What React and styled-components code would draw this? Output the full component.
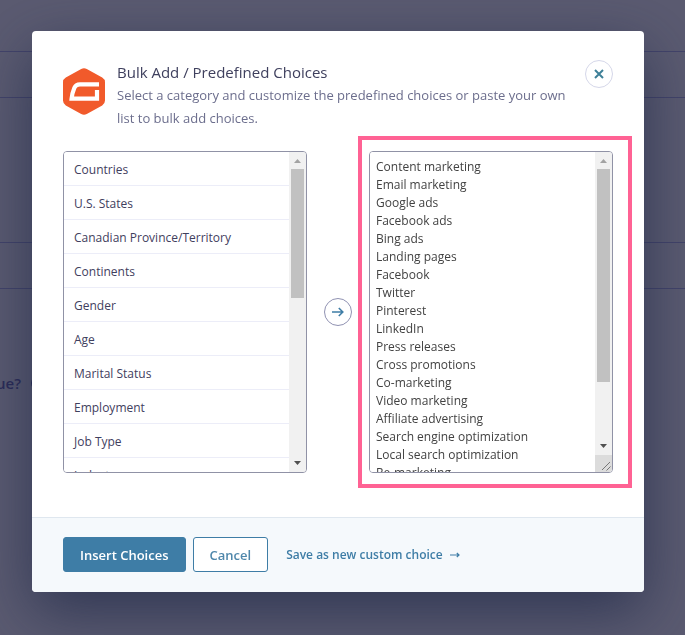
import React, { useState } from 'react'
import styled, { createGlobalStyle } from 'styled-components'

const categories = [
    'Countries',
    'U.S. States',
    'Canadian Province/Territory',
    'Continents',
    'Gender',
    'Age',
    'Marital Status',
    'Employment',
    'Job Type',
    'Industry',
]

const marketing = [
    'Content marketing',
    'Email marketing',
    'Google ads',
    'Facebook ads',
    'Bing ads',
    'Landing pages',
    'Facebook',
    'Twitter',
    'Pinterest',
    'LinkedIn',
    'Press releases',
    'Cross promotions',
    'Co-marketing',
    'Video marketing',
    'Affiliate advertising',
    'Search engine optimization',
    'Local search optimization',
    'Re-marketing',
].join('\n')

function Logo() {
    return (
        <LogoSvg viewBox="0 0 42 47" aria-hidden="true">
            <path
                fill="#f15a2b"
                d="M18.2 1 Q21 -.6 23.8 1 L39.2 9.6 Q42 11.2 42 14.4 V32.6 Q42 35.8 39.2 37.4 L23.8 46 Q21 47.6 18.2 46 L2.8 37.4 Q0 35.8 0 32.6 V14.4 Q0 11.2 2.8 9.6 Z"
            />
            <path
                fill="none"
                stroke="#fff"
                strokeWidth="4.2"
                d="M36 16.3 H17 Q12.8 16.3 11.4 19.8 Q9.2 25 8.6 30.7 H34 V22"
            />
        </LogoSvg>
    )
}

function ScrollBar({ thumb, grip }) {
    return (
        <Track aria-hidden="true">
            <Arrow viewBox="0 0 17 17">
                <path fill="#a3a3a3" d="M5 11 L8.5 7 L12 11 Z" />
            </Arrow>
            <Rail>
                <Thumb $size={thumb} />
            </Rail>
            <Arrow viewBox="0 0 17 17">
                <path fill="#505050" d="M5 6 L8.5 10 L12 6 Z" />
            </Arrow>
            {grip && (
                <Grip viewBox="0 0 17 17">
                    <path stroke="#777" fill="none" d="M7 15 L15 7 M11.5 15.5 L15.5 11.5" />
                </Grip>
            )}
        </Track>
    )
}

export default function App() {
    const [choices, setChoices] = useState(marketing)

    return (
        <>
            <GlobalStyle />
            <Page aria-hidden="true">
                <Field />
                <Field />
                <Question>
                    ue? <Info />
                </Question>
            </Page>
            <Overlay>
                <Modal role="dialog" aria-labelledby="bulk-title">
                    <Header>
                        <Logo />
                        <Heading>
                            <Title id="bulk-title">Bulk Add / Predefined Choices</Title>
                            <Description>
                                Select a category and customize the predefined choices or paste your own
                                list to bulk add choices.
                            </Description>
                        </Heading>
                        <CloseButton aria-label="Close">
                            <svg width="10" height="10" viewBox="0 0 10 10">
                                <path stroke="#3e8098" strokeWidth="2" d="M1 1 L9 9 M9 1 L1 9" />
                            </svg>
                        </CloseButton>
                    </Header>
                    <Panels>
                        <Frame>
                            <CategoryList>
                                {categories.map(name => (
                                    <li key={name}>
                                        <CategoryButton>{name}</CategoryButton>
                                    </li>
                                ))}
                            </CategoryList>
                            <ScrollBar thumb={45} />
                        </Frame>
                        <MoveButton aria-label="Add choices">
                            <svg width="12" height="10" viewBox="0 0 12 10">
                                <path fill="none" stroke="#3e7da6" strokeWidth="1.6" d="M0 5 H10.6 M6.8 1 L10.8 5 L6.8 9" />
                            </svg>
                        </MoveButton>
                        <Highlighted>
                            <Frame>
                                <ChoicesInput
                                    aria-label="Choices"
                                    spellCheck="false"
                                    value={choices}
                                    onChange={e => setChoices(e.target.value)}
                                />
                                <ScrollBar thumb={79} grip />
                            </Frame>
                        </Highlighted>
                    </Panels>
                    <Footer>
                        <FooterButton $primary>Insert Choices</FooterButton>
                        <FooterButton>Cancel</FooterButton>
                        <SaveLink href="#save">
                            Save as new custom choice
                            <svg width="10" height="6" viewBox="0 0 10 6" aria-hidden="true">
                                <path fill="none" stroke="#3e7da6" strokeWidth="1.2" d="M0 3 H9 M6.8 1 L9 3 L6.8 5" />
                            </svg>
                        </SaveLink>
                    </Footer>
                </Modal>
            </Overlay>
        </>
    )
}

const GlobalStyle = createGlobalStyle`
    * {
        box-sizing: border-box;
    }
    body {
        margin: 0;
        min-height: 100vh;
        background: #5b5b71;
        color: #3f405e;
        font-family: "Open Sans", "Noto Sans", sans-serif;
        font-size: 13px;
        overflow: hidden;
    }
    button, textarea {
        font: inherit;
    }
`

const Page = styled.div`
    display: flex;
    flex-direction: column;
    gap: 144px;
    height: 100vh;
    padding-top: 51px;
    overflow: hidden;
`

const Field = styled.div`
    flex: none;
    height: 47px;
    border: solid #43446a;
    border-width: 1px 0;
`

const Question = styled.div`
    display: flex;
    align-items: center;
    gap: 10px;
    margin: -60px 0 0 -4px;
    color: #2b2c58;
    font-size: 15px;
    font-weight: 600;
    line-height: 20px;
`

const Info = styled.span`
    width: 14px;
    height: 14px;
    border-radius: 50%;
    background: #2b2c58;
`

const Overlay = styled.div`
    position: fixed;
    inset: 0;
    padding: 31px 41px 31px 32px;
`

const Modal = styled.section`
    border-radius: 4px;
    background: #fff;
    box-shadow: 0 20px 60px rgba(25, 36, 68, 0.65);
`

const Header = styled.header`
    display: flex;
    align-items: flex-start;
    padding: 29px 31px 0 31px;
`

const LogoSvg = styled.svg`
    flex: none;
    width: 42px;
    height: 47px;
    margin: 8px 12px 0 0;
`

const Heading = styled.div`
    flex: 1;
    padding-right: 16px;
`

const Title = styled.h1`
    margin: 0;
    font-size: 15px;
    font-weight: 400;
    line-height: 24px;
`

const Description = styled.p`
    margin: 0;
    color: #6c6e8d;
    line-height: 23px;
`

const RoundButton = styled.button`
    display: grid;
    place-items: center;
    flex: none;
    width: 28px;
    height: 28px;
    padding: 0;
    border-radius: 50%;
    background: #fff;
    cursor: pointer;
`

const CloseButton = styled(RoundButton)`
    border: 1px solid #d5d7e9;
`

const MoveButton = styled(RoundButton)`
    border: 1px solid #9092b2;
`

const Panels = styled.div`
    display: grid;
    grid-template-columns: 1fr 28px 1fr;
    align-items: center;
    gap: 17px;
    padding: 21px 31px 44px;
`

const Frame = styled.div`
    display: flex;
    height: 322px;
    border: 1px solid #9092a6;
    border-radius: 4px;
    overflow: hidden;
`

const Highlighted = styled.div`
    position: relative;

    &::after {
        content: '';
        position: absolute;
        inset: -15px -19px -15px -11px;
        border: 4px solid #ff6294;
        pointer-events: none;
    }
`

const CategoryList = styled.ul`
    flex: 1;
    margin: 0;
    padding: 0;
    list-style: none;
    overflow: hidden;
`

const CategoryButton = styled.button`
    display: block;
    width: 100%;
    height: 34px;
    padding: 2px 10px 0;
    border: 0;
    border-bottom: 1px solid #ecedf8;
    background: #fff;
    color: #3f405e;
    font-size: 12px;
    text-align: left;
    cursor: pointer;
`

const ChoicesInput = styled.textarea`
    flex: 1;
    min-width: 0;
    padding: 6px 6px 0;
    border: 0;
    outline: 0;
    background: #fff;
    color: #424242;
    font-size: 12px;
    line-height: 18px;
    resize: none;
    overflow: hidden;
`

const Track = styled.div`
    display: flex;
    flex-direction: column;
    flex: none;
    width: 17px;
    background: #f1f1f1;
`

const Arrow = styled.svg`
    flex: none;
    width: 17px;
    height: 17px;
`

const Rail = styled.div`
    flex: 1;
    padding: 0 2px;
`

const Thumb = styled.div`
    height: ${props => props.$size}%;
    background: #c1c1c1;
`

const Grip = styled.svg`
    flex: none;
    width: 17px;
    height: 17px;
    background: #dcdcdc;
`

const Footer = styled.footer`
    display: flex;
    align-items: center;
    gap: 7px;
    padding: 19px 31px 20px;
    border-top: 1px solid #dfe7ef;
    border-radius: 0 0 4px 4px;
    background: #f5f9fc;
`

const FooterButton = styled.button`
    height: 35px;
    padding: 0 16px;
    border: 1px solid #3e7da6;
    border-radius: 3px;
    background: ${props => (props.$primary ? '#3e7da6' : '#fff')};
    color: ${props => (props.$primary ? '#fff' : '#4f87ab')};
    font-size: 13px;
    font-weight: 600;
    cursor: pointer;
`

const SaveLink = styled.a`
    display: flex;
    align-items: center;
    gap: 7px;
    margin-left: 11px;
    color: #3e7da6;
    font-size: 12px;
    font-weight: 600;
    text-decoration: none;
`
